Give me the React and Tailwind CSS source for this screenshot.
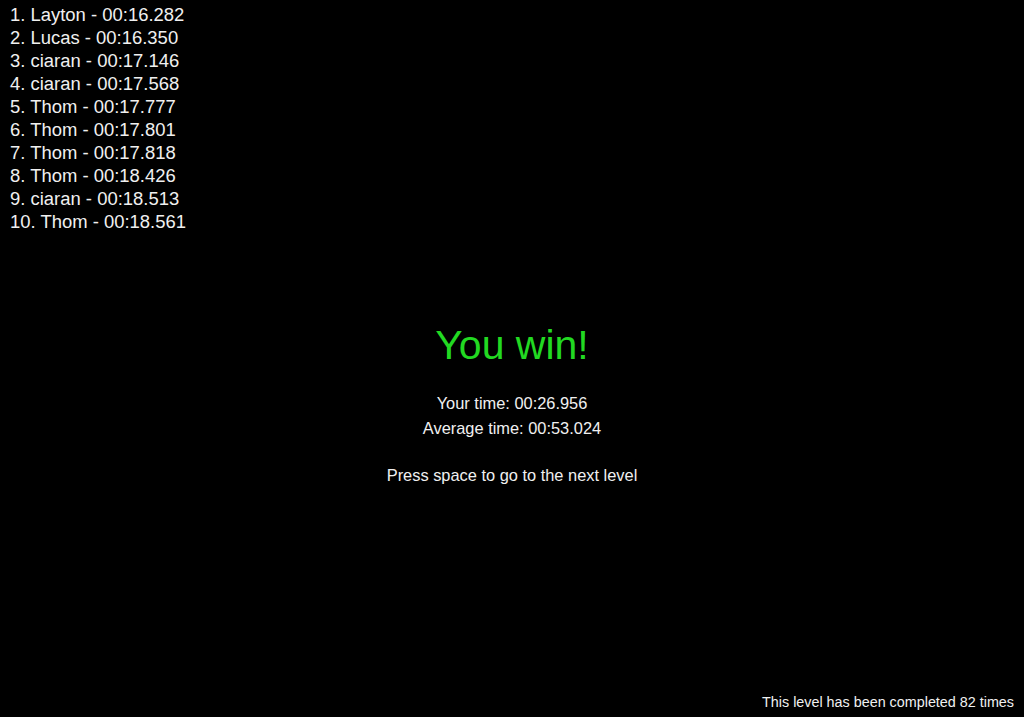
export default function App() {
  const scores = [
    ["Layton", "00:16.282"],
    ["Lucas", "00:16.350"],
    ["ciaran", "00:17.146"],
    ["ciaran", "00:17.568"],
    ["Thom", "00:17.777"],
    ["Thom", "00:17.801"],
    ["Thom", "00:17.818"],
    ["Thom", "00:18.426"],
    ["ciaran", "00:18.513"],
    ["Thom", "00:18.561"],
  ];
  return (
    <div
      className="h-screen w-full bg-black text-[#f0f0f0] flex flex-col overflow-hidden"
      style={{ fontFamily: '"Liberation Sans", Arial, sans-serif' }}
    >
      <ol className="pl-[10px] pt-[3px] text-[18.45px] leading-[23px]">
        {scores.map(([n, t], i) => (
          <li key={i}>
            {i + 1}. {n} - {t}
          </li>
        ))}
      </ol>
      <div className="mt-[89px] flex flex-col items-center">
        <h1 className="text-[41px] leading-[46px] text-[#22d922]">You win!</h1>
        <p className="mt-[23px] text-[16.4px] leading-[25px]">Your time: 00:26.956</p>
        <p className="text-[16.4px] leading-[25px]">Average time: 00:53.024</p>
        <p className="mt-[22px] text-[16.4px] leading-[25px]">Press space to go to the next level</p>
      </div>
      <div className="flex-1" />
      <div className="flex justify-end pr-[10px] pb-[7px] text-[14.35px] leading-[16px]">
        This level has been completed 82 times
      </div>
    </div>
  );
}
